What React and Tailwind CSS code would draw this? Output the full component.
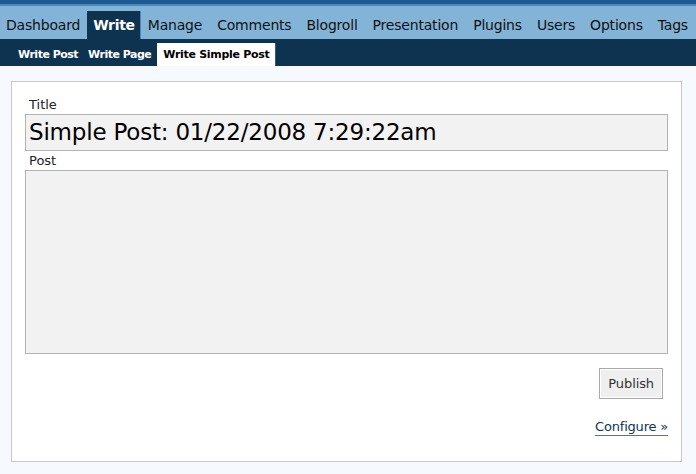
export default function App() {
  const menu = ["Dashboard", "Write", "Manage", "Comments", "Blogroll", "Presentation", "Plugins", "Users", "Options", "Tags"];
  const font = { fontFamily: '"DejaVu Sans", Verdana, sans-serif' };
  return (
    <div className="w-[696px] h-[474px] bg-[#f6faff] overflow-hidden" style={font}>
      <div className="h-[4px] bg-[#1d5a8e]" />
      <div className="h-[2px] bg-[#4b87bc]" />
      <div className="h-[33px] bg-[#83b4d8] flex items-end">
        {menu.map((m, i) =>
          m === "Write" ? (
            <div key={m} className="h-[28px] ml-[3px] pl-[6px] pr-[5px] bg-[#0e3350] border-r border-[#4b87bc] text-white font-bold text-[14px] leading-[28px] tracking-[-0.3px]">
              {m}
            </div>
          ) : (
            <div key={m} className={(i === 0 ? "pl-[6px] pr-[4px] " : "pl-[7px] pr-[8px] ") + "h-[28px] text-[#111] text-[14px] leading-[28px] tracking-[-0.2px] whitespace-nowrap"}>
              {m}
            </div>
          )
        )}
      </div>
      <div className="h-[27px] bg-[#0e3350] flex items-end pl-[13px]">
        <div className="h-[23px] px-[5px] text-white font-bold text-[11px] leading-[24px] tracking-[-0.5px]">Write Post</div>
        <div className="h-[23px] px-[5px] text-white font-bold text-[11px] leading-[24px] tracking-[-0.5px]">Write Page</div>
        <div className="h-[23px] ml-[1px] pl-[6px] pr-[6px] bg-white border-r border-[#2a5c88] text-black font-bold text-[11px] leading-[24px] tracking-[-0.3px]">Write Simple Post</div>
      </div>
      <div className="pt-[15px] pl-[11px]">
        <div className="w-[671px] h-[381px] bg-white border border-[#c8c8c8] px-[13px] pt-[14px]">
          <div className="text-[13px] leading-[18px] text-[#222] pl-[4px]">Title</div>
          <div className="h-[37px] bg-[#f2f2f2] border border-[#b3b3b3] text-[23px] leading-[35px] text-black pl-[3px] tracking-[-0.2px] whitespace-nowrap">
            Simple Post: 01/22/2008 7:29:22am
          </div>
          <div className="text-[13px] leading-[18px] text-[#222] pl-[4px] mt-[1px]">Post</div>
          <div className="h-[184px] bg-[#f2f2f2] border border-[#b3b3b3]" />
          <div className="flex justify-end mt-[14px] pr-[5px]">
            <button className="h-[31px] px-[8px] bg-[#efefef] border border-[#a9a9a9] shadow-[inset_0_0_0_1px_#fff] text-[13px] text-[#333] tracking-[-0.1px]">
              Publish
            </button>
          </div>
          <div className="flex justify-end mt-[19px]">
            <span className="text-[13px] text-[#0e3350] border-b border-[#2e7ed0] leading-[17px] tracking-[-0.2px]">Configure »</span>
          </div>
        </div>
      </div>
    </div>
  );
}
